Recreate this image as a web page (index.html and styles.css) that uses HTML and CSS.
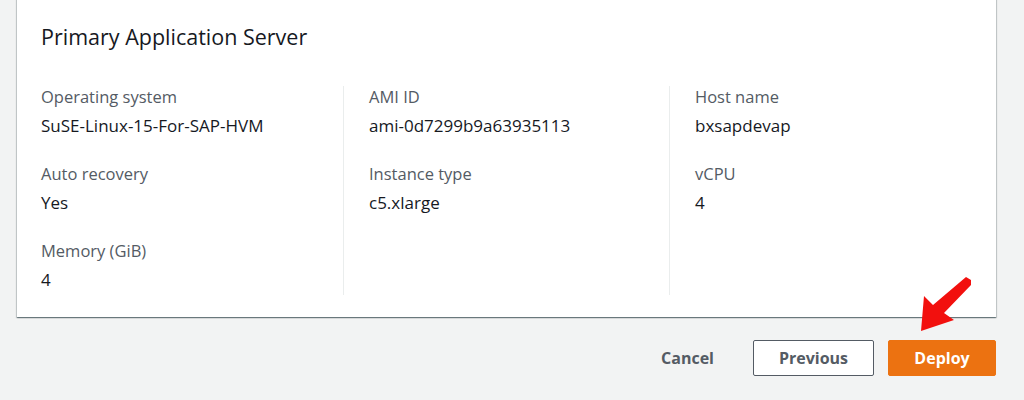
FILE: index.html
```html
<!DOCTYPE html>
<html lang="en">
<head>
  <meta charset="UTF-8" />
  <meta name="viewport" content="width=device-width, initial-scale=1.0"/>
  <title>Review and deploy</title>
  <link rel="stylesheet" href="styles.css">
</head>
<body>

<div class="page">

  <!-- Server summary -->
  <div class="card">
    <h2>Primary Application Server</h2>

    <div class="columns">
      <div class="column">
        <div class="field">
          <div class="label">Operating system</div>
          <div class="value">SuSE-Linux-15-For-SAP-HVM</div>
        </div>
        <div class="field">
          <div class="label">Auto recovery</div>
          <div class="value">Yes</div>
        </div>
        <div class="field">
          <div class="label">Memory (GiB)</div>
          <div class="value">4</div>
        </div>
      </div>

      <div class="column">
        <div class="field">
          <div class="label">AMI ID</div>
          <div class="value">ami-0d7299b9a63935113</div>
        </div>
        <div class="field">
          <div class="label">Instance type</div>
          <div class="value">c5.xlarge</div>
        </div>
      </div>

      <div class="column">
        <div class="field">
          <div class="label">Host name</div>
          <div class="value">bxsapdevap</div>
        </div>
        <div class="field">
          <div class="label">vCPU</div>
          <div class="value">4</div>
        </div>
      </div>
    </div>
  </div>

  <!-- Wizard actions -->
  <div class="actions">
    <button type="button" class="btn btn-link">Cancel</button>
    <button type="button" class="btn btn-normal">Previous</button>
    <button type="button" class="btn btn-primary">Deploy</button>
  </div>

  <!-- Annotation arrow -->
  <svg class="arrow" width="60" height="60" viewBox="0 0 60 60">
    <polygon points="46,0 51,3 51,8 24,36 34,43 1,54 4,19 13,28" fill="#f2100e"/>
  </svg>

</div>

</body>
</html>
```

FILE: styles.css
```css
body {
  font-family: 'Open Sans', 'Noto Sans', sans-serif;
  background-color: #f2f3f3;
  margin: 0;
  color: #16191f;
}

.page {
  position: relative;
  height: 400px;
  overflow: hidden;
}

.card {
  margin: -10px 28px 0 17px;
  padding: 34px 24px 22px;
  background: white;
  box-shadow: 0 1px 1px 0 rgba(0,28,36,0.4), 1px 1px 1px 0 rgba(0,28,36,0.15), -1px 1px 1px 0 rgba(0,28,36,0.15);
}

h2 {
  margin: 0 0 36px;
  font-size: 21.5px;
  font-weight: 400;
  line-height: 26px;
}

.columns {
  display: grid;
  grid-template-columns: 302px 326px 1fr;
}

.column {
  padding-left: 25px;
  border-left: 1px solid #eaeded;
  min-height: 209px;
}

.column:first-child {
  padding-left: 0;
  border-left: none;
}

.field {
  margin-bottom: 26px;
}

.field:last-child {
  margin-bottom: 0;
}

.label {
  color: #545b64;
  font-size: 16.5px;
  line-height: 22px;
  margin-bottom: 7px;
}

.value {
  font-size: 17px;
  line-height: 22px;
}

.actions {
  display: flex;
  justify-content: flex-end;
  align-items: center;
  margin: 23px 28px 0 0;
}

.btn {
  font-family: 'Open Sans', 'Noto Sans', sans-serif;
  font-size: 16px;
  font-weight: 700;
  height: 36px;
  border-radius: 2px;
  padding: 0 20px;
  cursor: pointer;
}

.btn-link {
  background: none;
  border: none;
  color: #545b64;
  margin-right: 19px;
}

.btn-normal {
  background: white;
  border: 1px solid #545b64;
  color: #545b64;
  width: 121px;
  margin-right: 14px;
}

.btn-primary {
  background-color: #ec7211;
  border: 1px solid #ec7211;
  color: white;
  width: 108px;
}

.arrow {
  position: absolute;
  left: 920px;
  top: 277px;
}
```
